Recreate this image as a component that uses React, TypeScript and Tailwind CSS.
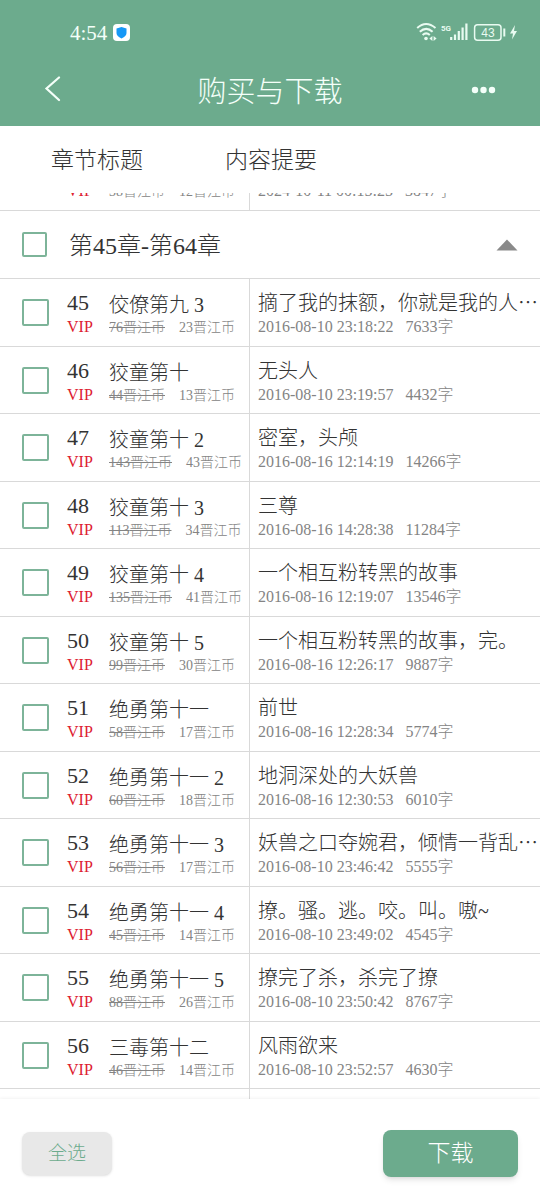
import { useLayoutEffect, useRef } from "react";

type Chapter = {
  no: number;
  title: string;
  oldPrice: number;
  price: number;
  summary: string;
  time: string;
  words: number;
};

const previous: Chapter = {
  no: 44,
  title: "",
  oldPrice: 38,
  price: 12,
  summary: "",
  time: "2024-10-11 00:15:25",
  words: 3847,
};

const chapters: Chapter[] = [
  { no: 45, title: "佼僚第九 3", oldPrice: 76, price: 23, summary: "摘了我的抹额，你就是我的人⋯", time: "2016-08-10 23:18:22", words: 7633 },
  { no: 46, title: "狡童第十", oldPrice: 44, price: 13, summary: "无头人", time: "2016-08-10 23:19:57", words: 4432 },
  { no: 47, title: "狡童第十 2", oldPrice: 143, price: 43, summary: "密室，头颅", time: "2016-08-16 12:14:19", words: 14266 },
  { no: 48, title: "狡童第十 3", oldPrice: 113, price: 34, summary: "三尊", time: "2016-08-16 14:28:38", words: 11284 },
  { no: 49, title: "狡童第十 4", oldPrice: 135, price: 41, summary: "一个相互粉转黑的故事", time: "2016-08-16 12:19:07", words: 13546 },
  { no: 50, title: "狡童第十 5", oldPrice: 99, price: 30, summary: "一个相互粉转黑的故事，完。", time: "2016-08-16 12:26:17", words: 9887 },
  { no: 51, title: "绝勇第十一", oldPrice: 58, price: 17, summary: "前世", time: "2016-08-16 12:28:34", words: 5774 },
  { no: 52, title: "绝勇第十一 2", oldPrice: 60, price: 18, summary: "地洞深处的大妖兽", time: "2016-08-16 12:30:53", words: 6010 },
  { no: 53, title: "绝勇第十一 3", oldPrice: 56, price: 17, summary: "妖兽之口夺婉君，倾情一背乱⋯", time: "2016-08-10 23:46:42", words: 5555 },
  { no: 54, title: "绝勇第十一 4", oldPrice: 45, price: 14, summary: "撩。骚。逃。咬。叫。嗷~", time: "2016-08-10 23:49:02", words: 4545 },
  { no: 55, title: "绝勇第十一 5", oldPrice: 88, price: 26, summary: "撩完了杀，杀完了撩", time: "2016-08-10 23:50:42", words: 8767 },
  { no: 56, title: "三毒第十二", oldPrice: 46, price: 14, summary: "风雨欲来", time: "2016-08-10 23:52:57", words: 4630 },
];

function StatusIcons() {
  return (
    <svg width="102" height="20" viewBox="0 0 102 20" fill="none" stroke="#e9fbf1" aria-hidden="true">
      {/* wifi */}
      <g strokeWidth="2">
        <path d="M1.2 6Q10 -2 19.500 6" />
        <path d="M3.800 9.800Q10.200 4 16.600 9.800" />
        <path d="M6.600 13Q10.200 9.800 13.800 13" />
      </g>
      <circle cx="10" cy="16.500" r="1.800" fill="#e9fbf1" stroke="none" />
      <path d="M16.400 14v5l-3-2.500zM17.600 14v5l3-2.500z" fill="#e9fbf1" stroke="none" />
      {/* network */}
      <text x="25" y="9" fontSize="8" fontWeight="700" fontFamily="Roboto" fill="#e9fbf1" stroke="none">5G</text>
      <path d="M35.200 18v-3M39 18v-5.500M42.800 18v-9M46.600 18v-12.500M50.400 18v-16.500" strokeWidth="2.200" />
      {/* battery */}
      <rect x="58.600" y="2.800" width="26.400" height="15.400" rx="3" strokeWidth="1.500" />
      <path d="M88.300 6.500v8" strokeWidth="2" />
      <text x="72" y="15" fontSize="12" textAnchor="middle" fontFamily="Liberation Sans" fill="#e9fbf1" stroke="none">43</text>
      <path d="M99 3l-5 8.500h3l-1 6 5-8.500h-3z" fill="#e9fbf1" stroke="none" />
    </svg>
  );
}

function ChapterRow({ chapter }: { chapter: Chapter }) {
  return (
    <tr className="h-[67px] odd:h-[68px]">
      <td className="border-r border-b border-[#d9d9d9] p-0 align-top">
        <div className="flex pt-2 pl-[22px]">
          <input
            type="checkbox"
            aria-label={`第${chapter.no}章`}
            className="mt-3 size-[27px] shrink-0 appearance-none rounded-xs border-2 border-[#7db499] checked:bg-[#6cab8d]"
          />
          <div className="ml-[18px] w-[42px] shrink-0">
            <div className="h-8 text-[22px] leading-8">{chapter.no}</div>
            <div className="text-base leading-4 text-[#dd2031]">VIP</div>
          </div>
          <div className="min-w-0 flex-1 whitespace-nowrap">
            <div className="h-8 text-xl leading-9">{chapter.title}</div>
            <div className="flex gap-3.5 text-sm leading-[18px] text-[#848484]">
              <s>{chapter.oldPrice}晋江币</s>
              <span>{chapter.price}晋江币</span>
            </div>
          </div>
        </div>
      </td>
      <td className="border-b border-[#d9d9d9] py-2 pr-0 pl-2 align-top">
        <div className="h-8 truncate text-xl leading-8">{chapter.summary}</div>
        <div className="flex gap-3 text-base leading-4 whitespace-nowrap text-[#848484]">
          <span>{chapter.time}</span>
          <span>{chapter.words}字</span>
        </div>
      </td>
    </tr>
  );
}

export default function App() {
  const listRef = useRef<HTMLDivElement>(null);

  useLayoutEffect(() => {
    if (listRef.current) listRef.current.scrollTop = 50;
  }, []);

  return (
    <div className="flex h-screen flex-col bg-white font-['Liberation_Serif','Noto_Sans_CJK_SC',serif] font-light text-[#333]">
      <header className="shrink-0 bg-[#6cab8d] text-[#f4fff9]">
        <div className="flex h-[60px] items-center pt-1 pr-[22px] pl-[70px]">
          <span className="pt-0.5 text-[21px] leading-6">4:54</span>
          <svg className="ml-1.5" width="17" height="17" viewBox="0 0 17 17" aria-hidden="true">
            <rect width="17" height="17" rx="4" fill="#fff" />
            <path d="M8.500 3l5 1.500v4.500q0 3-5 5.500q-5-2.500-5-5.500v-4.500z" fill="#1698f6" />
          </svg>
          <div className="ml-auto">
            <StatusIcons />
          </div>
        </div>
        <div className="flex h-[66px] items-center justify-between px-[42px] pb-1.5">
          <button type="button" aria-label="返回" className="w-[30px]">
            <svg width="20" height="28" viewBox="0 0 20 28" fill="none" stroke="currentColor" strokeWidth="2.200" strokeLinecap="round">
              <path d="M17 1.500L4.500 12.500L17 24" />
            </svg>
          </button>
          <h1 className="pt-1 text-[29px] leading-10">购买与下载</h1>
          <button type="button" aria-label="更多" className="w-[30px]">
            <svg width="30" height="10" viewBox="0 0 30 10" fill="currentColor">
              <circle cx="7" cy="5" r="3.200" />
              <circle cx="15.500" cy="5" r="3.200" />
              <circle cx="24" cy="5" r="3.200" />
            </svg>
          </button>
        </div>
      </header>

      <div className="flex h-[67px] shrink-0 items-center pt-1 pl-[51px] text-[23px]">
        <span className="w-[174px]">章节标题</span>
        <span>内容提要</span>
      </div>

      <main ref={listRef} className="min-h-0 flex-1 overflow-y-auto [scrollbar-width:none]">
        <table className="w-full table-fixed border-separate border-spacing-0">
          <colgroup>
            <col className="w-[250px]" />
            <col />
          </colgroup>
          <tbody>
            <ChapterRow chapter={previous} />
          </tbody>
          <tbody>
            <tr className="h-[68px]">
              <th colSpan={2} className="border-b border-[#d9d9d9] p-0 text-left font-light">
                <div className="flex items-center px-[22px]">
                  <label className="flex items-center gap-[22px] text-2xl">
                    <input
                      type="checkbox"
                      className="size-[25px] appearance-none rounded-xs border-2 border-[#7db499] checked:bg-[#6cab8d]"
                    />
                    <span className="pt-0.5">第45章-第64章</span>
                  </label>
                  <button type="button" aria-label="收起" className="ml-auto">
                    <svg width="22" height="12" viewBox="0 0 22 12" fill="#8a8a8a">
                      <path d="M11 0.500L21.500 11.500H0.500z" />
                    </svg>
                  </button>
                </div>
              </th>
            </tr>
          </tbody>
          <tbody>
            {chapters.map((chapter) => (
              <ChapterRow key={chapter.no} chapter={chapter} />
            ))}
          </tbody>
          <tbody>
            <tr className="h-[68px]">
              <td className="border-r border-[#d9d9d9]" />
              <td />
            </tr>
          </tbody>
        </table>
      </main>

      <footer className="flex h-[101px] shrink-0 items-center justify-between px-[22px] pt-2 shadow-[0_-1px_3px_rgba(0,0,0,0.05)]">
        <button type="button" className="h-[43px] w-[90px] rounded-lg bg-[#e8e8e8] pt-0.5 text-[19px] text-[#6cab8d] shadow">
          全选
        </button>
        <button type="button" className="h-[47px] w-[135px] rounded-lg bg-[#6cab8d] pt-0.5 text-[23px] text-white shadow-md">
          下载
        </button>
      </footer>
    </div>
  );
}
